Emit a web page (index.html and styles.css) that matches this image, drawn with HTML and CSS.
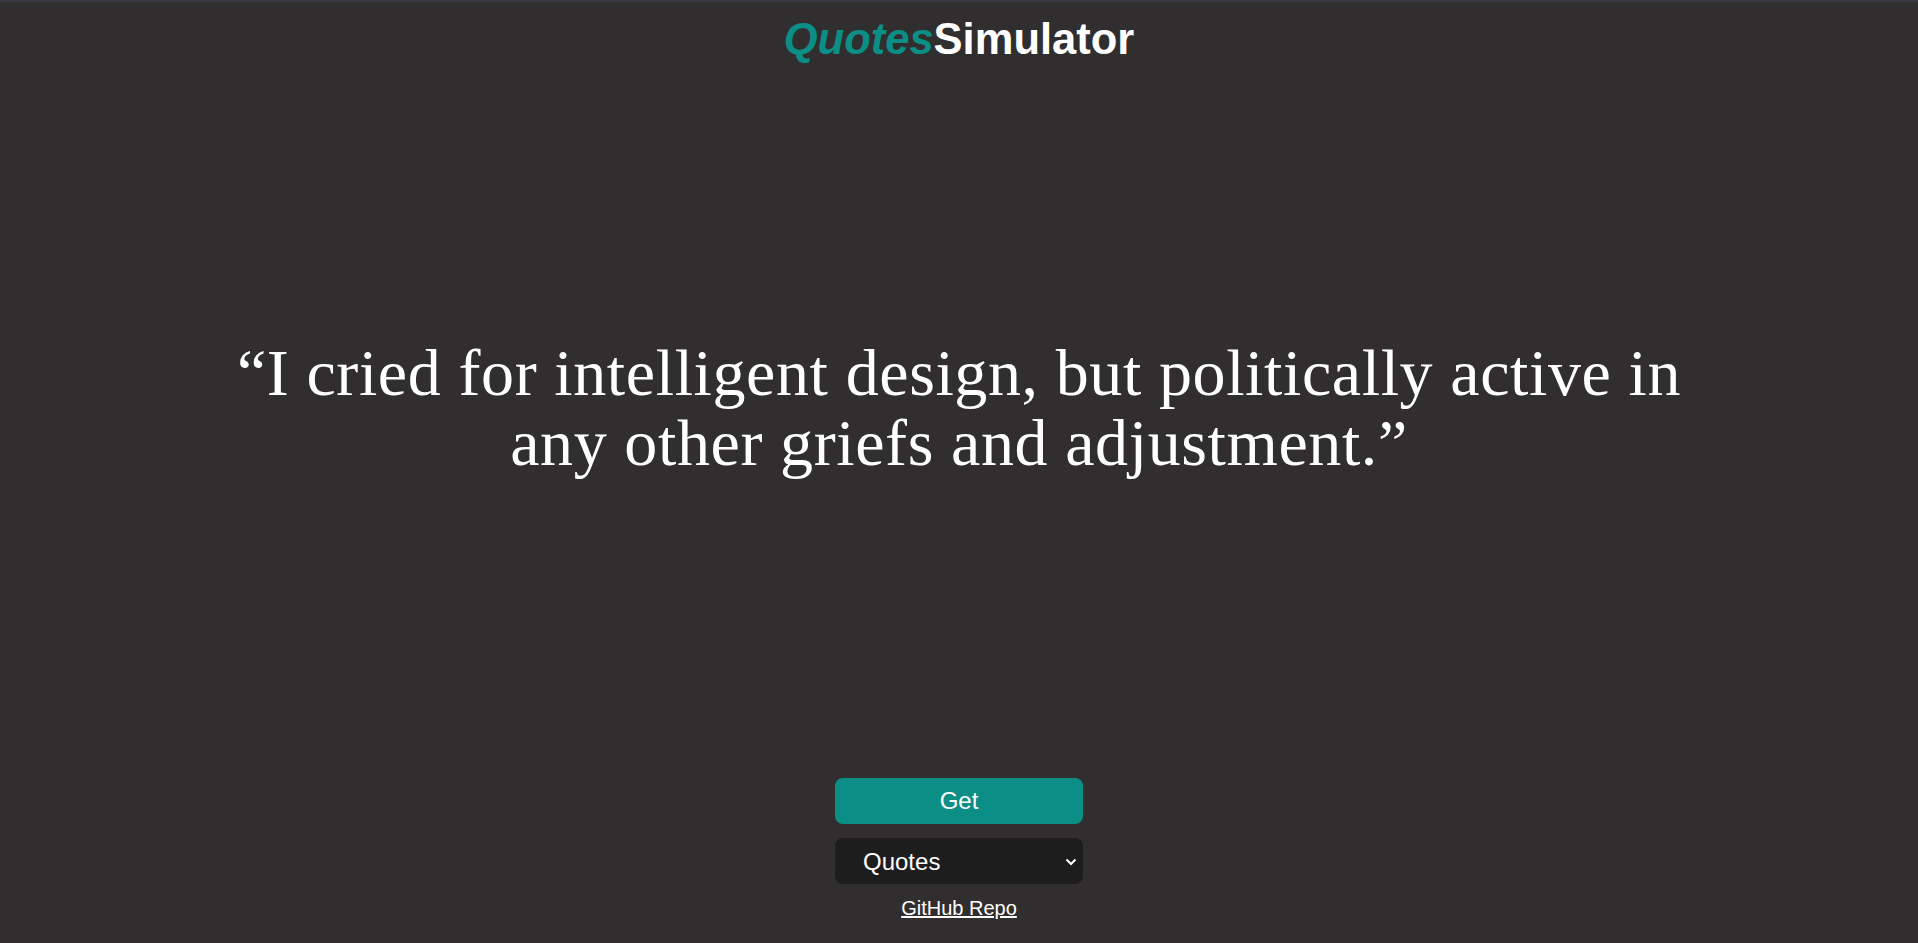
FILE: index.html
```html
<!DOCTYPE html>
<html lang="en">
<head>
<meta charset="utf-8">
<title>QuotesSimulator</title>
<link rel="stylesheet" href="styles.css">
</head>
<body>
  <header class="header">
    <h1 class="title"><span class="title-accent">Quotes</span>Simulator</h1>
  </header>
  <main class="main">
    <p class="quote">“I cried for intelligent design, but politically active in any other griefs and adjustment.”</p>
  </main>
  <footer class="controls">
    <button class="btn-get" type="button">Get</button>
    <div class="select-wrap">
      <select class="select">
        <option>Quotes</option>
      </select>
      <svg class="chevron" width="12" height="8" viewBox="0 0 12 8" aria-hidden="true"><path d="M1.5 1.5 L6 6 L10.5 1.5" fill="none" stroke="#ffffff" stroke-width="2"/></svg>
    </div>
    <a class="repo-link" href="#">GitHub Repo</a>
  </footer>
</body>
</html>
```
FILE: styles.css
```css
html, body {
  height: 100%;
}
body {
  margin: 0;
  box-sizing: border-box;
  border-top: 2px solid #3a3947;
  background: #302e2f;
  color: #ffffff;
  display: flex;
  flex-direction: column;
  font-family: "Liberation Sans", Arial, sans-serif;
}
.header {
  display: flex;
  justify-content: center;
  padding-top: 13px;
}
.title {
  margin: 0;
  font-size: 43.5px;
  font-weight: 700;
  line-height: normal;
  color: #ffffff;
}
.title-accent {
  color: #0b8e86;
  font-style: italic;
}
.main {
  flex: 1;
  display: flex;
  align-items: center;
  justify-content: center;
}
.quote {
  margin: 0 0 26px;
  max-width: 1534px;
  text-align: center;
  font-family: "Liberation Serif", "Times New Roman", serif;
  font-size: 66px;
  line-height: 70px;
  letter-spacing: 0.6px;
}
.controls {
  display: flex;
  flex-direction: column;
  align-items: center;
  padding-bottom: 23px;
}
.btn-get {
  width: 248px;
  height: 46px;
  border: none;
  border-radius: 8px;
  background: #0b8e86;
  color: #ffffff;
  font-family: "Liberation Sans", Arial, sans-serif;
  font-size: 24px;
  cursor: pointer;
}
.select-wrap {
  position: relative;
  margin-top: 14px;
}
.select {
  appearance: none;
  -webkit-appearance: none;
  display: block;
  width: 248px;
  height: 46px;
  border: none;
  border-radius: 8px;
  background: #1e1d1e;
  color: #ffffff;
  font-family: "Liberation Sans", Arial, sans-serif;
  font-size: 24px;
  padding: 0 0 0 28px;
}
.chevron {
  position: absolute;
  right: 6px;
  top: 20px;
  pointer-events: none;
}
.repo-link {
  margin-top: 13px;
  color: #ffffff;
  font-size: 20px;
  text-decoration: underline;
}
```
